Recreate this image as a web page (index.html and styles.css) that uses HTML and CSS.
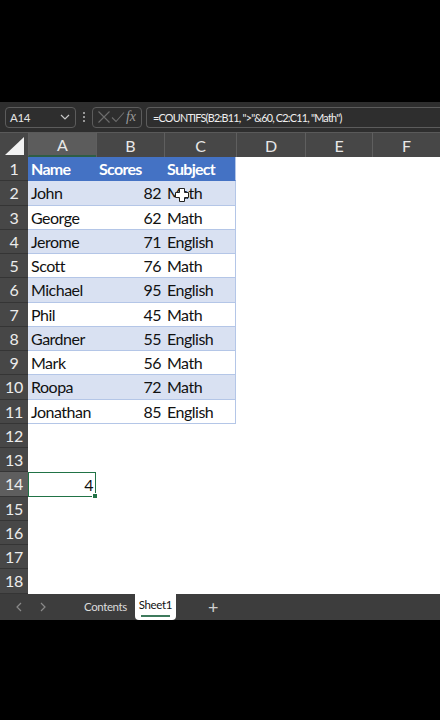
FILE: index.html
```html
<!DOCTYPE html>
<html>

<head>
  <meta charset="UTF-8">
  <title>Sheet1</title>
  <link rel="stylesheet" href="styles.css">
</head>

<body>
  <div class="screen">
    <div class="letterbox"></div>

    <!-- Name box + formula bar -->
    <div class="formula-bar">
      <div class="name-box">
        <span>A14</span>
        <svg class="chevron" width="10" height="6" viewBox="0 0 10 6"><path d="M1 1 L5 5 L9 1" fill="none" stroke="#c8c8c8" stroke-width="1.2"/></svg>
      </div>
      <div class="dots">
        <svg width="4" height="12" viewBox="0 0 4 12"><circle cx="2" cy="2" r="1" fill="#bbb"/><circle cx="2" cy="6" r="1" fill="#bbb"/><circle cx="2" cy="10" r="1" fill="#bbb"/></svg>
      </div>
      <div class="fx-box">
        <svg width="14" height="14" viewBox="0 0 14 14"><path d="M1.5 1.5 L12.5 12.5 M12.5 1.5 L1.5 12.5" stroke="#6d6d6d" stroke-width="1.1"/></svg>
        <svg width="14" height="14" viewBox="0 0 14 14"><path d="M1 7.5 L5 11.5 L13 2.5" fill="none" stroke="#6d6d6d" stroke-width="1.1"/></svg>
        <span class="fx">fx</span>
      </div>
      <div class="formula">=COUNTIFS(B2:B11, "&gt;"&amp;60, C2:C11, "Math")</div>
    </div>

    <!-- Worksheet grid -->
    <div class="grid">
      <div class="corner">
        <svg width="20" height="18" viewBox="0 0 20 18"><path d="M19 0 L19 18 L0 18 Z" fill="#f2f2f2"/></svg>
      </div>
      <div class="col-head selected">A</div>
      <div class="col-head">B</div>
      <div class="col-head">C</div>
      <div class="col-head">D</div>
      <div class="col-head">E</div>
      <div class="col-head">F</div>

      <div class="row-head">1</div>
      <div class="cell th">Name</div>
      <div class="cell th">Scores</div>
      <div class="cell th last">Subject</div>
      <div class="cell"></div><div class="cell"></div><div class="cell"></div>

      <div class="row-head">2</div>
      <div class="cell band">John</div>
      <div class="cell band num">82</div>
      <div class="cell band last">Math</div>
      <div class="cell"></div><div class="cell"></div><div class="cell"></div>

      <div class="row-head">3</div>
      <div class="cell plain">George</div>
      <div class="cell plain num">62</div>
      <div class="cell plain last">Math</div>
      <div class="cell"></div><div class="cell"></div><div class="cell"></div>

      <div class="row-head">4</div>
      <div class="cell band">Jerome</div>
      <div class="cell band num">71</div>
      <div class="cell band last">English</div>
      <div class="cell"></div><div class="cell"></div><div class="cell"></div>

      <div class="row-head">5</div>
      <div class="cell plain">Scott</div>
      <div class="cell plain num">76</div>
      <div class="cell plain last">Math</div>
      <div class="cell"></div><div class="cell"></div><div class="cell"></div>

      <div class="row-head">6</div>
      <div class="cell band">Michael</div>
      <div class="cell band num">95</div>
      <div class="cell band last">English</div>
      <div class="cell"></div><div class="cell"></div><div class="cell"></div>

      <div class="row-head">7</div>
      <div class="cell plain">Phil</div>
      <div class="cell plain num">45</div>
      <div class="cell plain last">Math</div>
      <div class="cell"></div><div class="cell"></div><div class="cell"></div>

      <div class="row-head">8</div>
      <div class="cell band">Gardner</div>
      <div class="cell band num">55</div>
      <div class="cell band last">English</div>
      <div class="cell"></div><div class="cell"></div><div class="cell"></div>

      <div class="row-head">9</div>
      <div class="cell plain">Mark</div>
      <div class="cell plain num">56</div>
      <div class="cell plain last">Math</div>
      <div class="cell"></div><div class="cell"></div><div class="cell"></div>

      <div class="row-head">10</div>
      <div class="cell band">Roopa</div>
      <div class="cell band num">72</div>
      <div class="cell band last">Math</div>
      <div class="cell"></div><div class="cell"></div><div class="cell"></div>

      <div class="row-head">11</div>
      <div class="cell plain">Jonathan</div>
      <div class="cell plain num">85</div>
      <div class="cell plain last">English</div>
      <div class="cell"></div><div class="cell"></div><div class="cell"></div>

      <div class="row-head">12</div>
      <div class="cell"></div><div class="cell"></div><div class="cell"></div><div class="cell"></div><div class="cell"></div><div class="cell"></div>

      <div class="row-head">13</div>
      <div class="cell"></div><div class="cell"></div><div class="cell"></div><div class="cell"></div><div class="cell"></div><div class="cell"></div>

      <div class="row-head selected">14</div>
      <div class="cell num active">4<span class="fill-handle"></span></div>
      <div class="cell"></div><div class="cell"></div><div class="cell"></div><div class="cell"></div><div class="cell"></div>

      <div class="row-head">15</div>
      <div class="cell"></div><div class="cell"></div><div class="cell"></div><div class="cell"></div><div class="cell"></div><div class="cell"></div>

      <div class="row-head">16</div>
      <div class="cell"></div><div class="cell"></div><div class="cell"></div><div class="cell"></div><div class="cell"></div><div class="cell"></div>

      <div class="row-head">17</div>
      <div class="cell"></div><div class="cell"></div><div class="cell"></div><div class="cell"></div><div class="cell"></div><div class="cell"></div>

      <div class="row-head">18</div>
      <div class="cell"></div><div class="cell"></div><div class="cell"></div><div class="cell"></div><div class="cell"></div><div class="cell"></div>

      <!-- mouse pointer (white cross) -->
      <svg class="pointer" width="14" height="14" viewBox="0 0 14 14">
        <path d="M4.5 0.5 H9.5 V4.5 H13.5 V9.5 H9.5 V13.5 H4.5 V9.5 H0.5 V4.5 H4.5 Z" fill="#fff" stroke="#222" stroke-width="1"/>
      </svg>
    </div>

    <!-- Sheet tabs -->
    <div class="tab-bar">
      <svg class="nav" width="8" height="10" viewBox="0 0 8 10"><path d="M6 1 L2 5 L6 9" fill="none" stroke="#8a8a8a" stroke-width="1.2"/></svg>
      <svg class="nav" width="8" height="10" viewBox="0 0 8 10"><path d="M2 1 L6 5 L2 9" fill="none" stroke="#8a8a8a" stroke-width="1.2"/></svg>
      <div class="tab">Contents</div>
      <div class="tab current">Sheet1</div>
      <div class="add">+</div>
    </div>

    <div class="letterbox bottom"></div>
  </div>
</body>

</html>
```

FILE: styles.css
```css
body {
  margin: 0;
  background-color: #000;
  font-family: Lato, "Open Sans", sans-serif;
}

.screen {
  width: 440px;
  height: 720px;
  display: flex;
  flex-direction: column;
  overflow: hidden;
}

.letterbox {
  height: 102px;
  background-color: #000;
  flex-shrink: 0;
}

.letterbox.bottom {
  flex: 1;
}

/* formula bar */
.formula-bar {
  height: 30px;
  background-color: #2e2e2e;
  display: flex;
  align-items: center;
  padding-left: 5px;
  flex-shrink: 0;
}

.name-box {
  width: 71px;
  height: 21px;
  border: 1px solid #5c5c5c;
  border-radius: 4px;
  display: flex;
  align-items: center;
  justify-content: space-between;
  padding: 0 5px 0 4px;
  box-sizing: border-box;
  color: #e6e6e6;
  font-size: 11.5px;
  letter-spacing: -0.3px;
}

.dots {
  width: 16px;
  display: flex;
  justify-content: center;
}

.fx-box {
  width: 50px;
  height: 21px;
  border: 1px solid #5c5c5c;
  border-radius: 4px;
  display: flex;
  align-items: center;
  justify-content: space-between;
  padding: 0 5px 0 4px;
  box-sizing: border-box;
}

.fx {
  font-family: "Liberation Serif", serif;
  font-style: italic;
  color: #9a9a9a;
  font-size: 14px;
}

.formula {
  flex: 1;
  height: 21px;
  margin-left: 4px;
  border: 1px solid #5c5c5c;
  border-right: none;
  border-radius: 4px 0 0 4px;
  box-sizing: border-box;
  color: #f0f0f0;
  font-size: 10.8px;
  line-height: 19px;
  padding-left: 6px;
  letter-spacing: -0.75px;
}

/* worksheet grid */
.grid {
  position: relative;
  display: grid;
  grid-template-columns: 28px 68px 68px 72px 69px 67px 68px;
  grid-template-rows: 25px repeat(18, 24.25px);
  background-color: #fff;
  flex-shrink: 0;
}

.corner {
  background-color: #474747;
  display: flex;
  align-items: flex-end;
  justify-content: flex-end;
  padding: 0 3px 2px 0;
  box-sizing: border-box;
  border-top: 1px solid #5a5a5a;
}

.col-head {
  background-color: #474747;
  color: #e8e8e8;
  font-size: 16px;
  display: flex;
  align-items: center;
  justify-content: center;
  border-left: 1px solid #5f5f5f;
  border-top: 1px solid #5a5a5a;
  box-sizing: border-box;
}

.col-head.selected {
  background-color: #5c5c5c;
  border-bottom: 2px solid #2f5d44;
}

.row-head {
  background-color: #474747;
  color: #ececec;
  font-size: 16px;
  letter-spacing: -0.3px;
  display: flex;
  align-items: center;
  justify-content: center;
  border-bottom: 1px solid #353535;
  box-sizing: border-box;
}

.row-head.selected {
  background-color: #5e5e5e;
}

.cell {
  font-size: 16px;
  letter-spacing: -0.5px;
  color: #111;
  display: flex;
  align-items: center;
  padding: 0 3px;
  white-space: nowrap;
  box-sizing: border-box;
  min-width: 0;
}

.cell.num {
  justify-content: flex-end;
}

/* table styling */
.cell.th {
  background-color: #4472c4;
  color: #fff;
  font-weight: bold;
  letter-spacing: -0.7px;
  border-bottom: 1px solid #4472c4;
}

.cell.band {
  background-color: #d9e1f2;
  border-bottom: 1px solid #b4c6e7;
}

.cell.plain {
  background-color: #fff;
  border-bottom: 1px solid #b4c6e7;
}

.cell.last {
  border-right: 1px solid #b4c6e7;
}

.cell.active {
  position: relative;
  border: 1.5px solid #217346;
  padding-right: 2px;
}

.fill-handle {
  position: absolute;
  right: -3px;
  bottom: -3px;
  width: 4px;
  height: 4px;
  background-color: #217346;
  border: 1px solid #fff;
}

.pointer {
  position: absolute;
  left: 175px;
  top: 56px;
}

/* sheet tabs */
.tab-bar {
  height: 26px;
  background-color: #3d3d3d;
  display: flex;
  align-items: center;
  flex-shrink: 0;
}

.nav {
  margin-left: 15px;
}

.nav + .nav {
  margin-left: 16px;
}

.tab {
  color: #dcdcdc;
  font-size: 11.5px;
  letter-spacing: -0.4px;
  padding: 0 5px;
  margin-left: 32px;
}

.tab.current {
  position: relative;
  margin-left: 3px;
  align-self: stretch;
  background-color: #fff;
  color: #111;
  border-radius: 0 0 4px 4px;
  display: flex;
  align-items: center;
  padding: 0 4px 4px;
}

.tab.current::after {
  content: "";
  position: absolute;
  left: 6px;
  right: 6px;
  bottom: 3px;
  height: 2px;
  background-color: #3e7a5c;
}

.add {
  color: #d0d0d0;
  font-size: 18px;
  margin-left: 32px;
}
```
